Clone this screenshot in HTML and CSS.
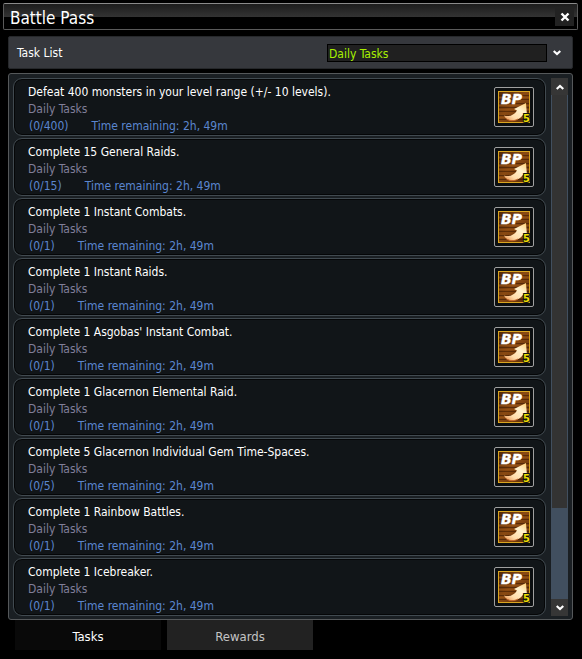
FILE: index.html
```html
<!DOCTYPE html>
<html lang="en">
<head>
	<meta charset="UTF-8">
	<meta name="viewport" content="width=device-width, initial-scale=1.0">
	<title>Battle Pass</title>
	<link rel="stylesheet" href="styles.css">
</head>
<body>
	<!-- reward icon, reused by every task -->
	<svg class="defs" width="0" height="0" aria-hidden="true">
		<defs>
			<linearGradient id="wood" x1="0" y1="0" x2="1" y2="1">
				<stop offset="0" stop-color="#4e2606"/>
				<stop offset="0.45" stop-color="#8a4a12"/>
				<stop offset="1" stop-color="#5a2a06"/>
			</linearGradient>
			<linearGradient id="gold" x1="0" y1="1" x2="1" y2="0">
				<stop offset="0" stop-color="#e08a4a"/>
				<stop offset="0.3" stop-color="#ffdcaa"/>
				<stop offset="0.65" stop-color="#fff2cf"/>
				<stop offset="1" stop-color="#ffcf70"/>
			</linearGradient>
			<symbol id="bp" viewBox="0 0 32 32">
				<rect width="32" height="32" fill="url(#wood)"/>
				<path d="M1 4.5h30M1 8.5h30M1 12.5h30M1 16.5h30M1 20.5h30M1 24.5h30M1 28.5h30" stroke="#3c1a04" stroke-opacity="0.6"/>
				<path d="M1 6.5h30M1 14.5h30M1 18.5h30M1 26.5h30" stroke="#a8601c" stroke-opacity="0.4"/>
				<rect x="0.5" y="0.5" width="31" height="31" fill="none" stroke="#d9a520"/>
				<path d="M6 24.5C11 26 16 24.5 19 19.5L16 18L28 12L29 24.5L26 22.5C23 27.5 18 30 13 29.5C9 29 7 27 6 24.5Z" fill="url(#gold)"/>
				<path d="M8 27.5C11 30 16 30.5 20 28" fill="none" stroke="#c8682a" stroke-width="1"/>
				<text class="bp-text" x="3" y="13">BP</text>
				<text class="bp-count" x="25" y="31">5</text>
			</symbol>
		</defs>
	</svg>

	<header class="title-bar">
		<h1>Battle Pass</h1>
		<button class="close" type="button" aria-label="Close">
			<svg width="10" height="10" viewBox="0 0 10 10"><path d="M1.5 1.5L8.5 8.5M8.5 1.5L1.5 8.5" stroke="#fff" stroke-width="2.4"/></svg>
		</button>
	</header>

	<main class="content">
		<div class="filter">
			<label for="filter">Task List</label>
			<div class="filter-box">
				<select id="filter">
					<option>Daily Tasks</option>
				</select>
				<svg class="chevron" width="8" height="6" viewBox="0 0 8 6"><path d="M0.7 1L4 4L7.3 1" fill="none" stroke="#fff" stroke-width="2.2"/></svg>
			</div>
		</div>

		<div class="panel">
			<ul class="tasks">
				<li class="task">
					<div class="info">
						<h2>Defeat 400 monsters in your level range (+/- 10 levels).</h2>
						<p class="type">Daily Tasks</p>
						<p class="progress"><span>(0/400)</span><span>Time remaining: 2h, 49m</span></p>
					</div>
					<div class="reward"><svg width="32" height="32"><use href="#bp"/></svg></div>
				</li>
				<li class="task">
					<div class="info">
						<h2>Complete 15 General Raids.</h2>
						<p class="type">Daily Tasks</p>
						<p class="progress"><span>(0/15)</span><span>Time remaining: 2h, 49m</span></p>
					</div>
					<div class="reward"><svg width="32" height="32"><use href="#bp"/></svg></div>
				</li>
				<li class="task">
					<div class="info">
						<h2>Complete 1 Instant Combats.</h2>
						<p class="type">Daily Tasks</p>
						<p class="progress"><span>(0/1)</span><span>Time remaining: 2h, 49m</span></p>
					</div>
					<div class="reward"><svg width="32" height="32"><use href="#bp"/></svg></div>
				</li>
				<li class="task">
					<div class="info">
						<h2>Complete 1 Instant Raids.</h2>
						<p class="type">Daily Tasks</p>
						<p class="progress"><span>(0/1)</span><span>Time remaining: 2h, 49m</span></p>
					</div>
					<div class="reward"><svg width="32" height="32"><use href="#bp"/></svg></div>
				</li>
				<li class="task">
					<div class="info">
						<h2>Complete 1 Asgobas' Instant Combat.</h2>
						<p class="type">Daily Tasks</p>
						<p class="progress"><span>(0/1)</span><span>Time remaining: 2h, 49m</span></p>
					</div>
					<div class="reward"><svg width="32" height="32"><use href="#bp"/></svg></div>
				</li>
				<li class="task">
					<div class="info">
						<h2>Complete 1 Glacernon Elemental Raid.</h2>
						<p class="type">Daily Tasks</p>
						<p class="progress"><span>(0/1)</span><span>Time remaining: 2h, 49m</span></p>
					</div>
					<div class="reward"><svg width="32" height="32"><use href="#bp"/></svg></div>
				</li>
				<li class="task">
					<div class="info">
						<h2>Complete 5 Glacernon Individual Gem Time-Spaces.</h2>
						<p class="type">Daily Tasks</p>
						<p class="progress"><span>(0/5)</span><span>Time remaining: 2h, 49m</span></p>
					</div>
					<div class="reward"><svg width="32" height="32"><use href="#bp"/></svg></div>
				</li>
				<li class="task">
					<div class="info">
						<h2>Complete 1 Rainbow Battles.</h2>
						<p class="type">Daily Tasks</p>
						<p class="progress"><span>(0/1)</span><span>Time remaining: 2h, 49m</span></p>
					</div>
					<div class="reward"><svg width="32" height="32"><use href="#bp"/></svg></div>
				</li>
				<li class="task">
					<div class="info">
						<h2>Complete 1 Icebreaker.</h2>
						<p class="type">Daily Tasks</p>
						<p class="progress"><span>(0/1)</span><span>Time remaining: 2h, 49m</span></p>
					</div>
					<div class="reward"><svg width="32" height="32"><use href="#bp"/></svg></div>
				</li>
			</ul>

			<div class="scrollbar">
				<button type="button" aria-label="Scroll up">
					<svg width="8" height="6" viewBox="0 0 8 6"><path d="M0.7 5L4 2L7.3 5" fill="none" stroke="#fff" stroke-width="2.2"/></svg>
				</button>
				<div class="track"><div class="thumb"></div></div>
				<button type="button" aria-label="Scroll down">
					<svg width="8" height="6" viewBox="0 0 8 6"><path d="M0.7 1L4 4L7.3 1" fill="none" stroke="#fff" stroke-width="2.2"/></svg>
				</button>
			</div>
		</div>

		<nav class="tabs">
			<button class="tab active" type="button">Tasks</button>
			<button class="tab" type="button">Rewards</button>
		</nav>
	</main>
</body>
</html>
```
FILE: styles.css
```css
* {
	box-sizing: border-box;
}

body {
	margin: 0;
	padding: 3px 4px 10px 3px;
	background: #000;
	color: #fff;
	font-family: Tahoma, "DejaVu Sans Condensed", "Noto Sans", sans-serif;
	font-size: 12px;
	line-height: 17px;
}

h1, h2, p, ul {
	margin: 0;
	padding: 0;
	font-weight: normal;
}

button {
	display: flex;
	align-items: center;
	justify-content: center;
	padding: 0;
	border: 0;
	color: inherit;
	font: inherit;
}

.defs {
	position: absolute;
}

.title-bar {
	display: flex;
	align-items: center;
	justify-content: space-between;
	height: 27px;
	padding: 0 3px 0 6px;
	border: 1px solid #5a5a5a;
	border-top-color: #8a8a8a;
	border-radius: 2px;
	background: linear-gradient(#1c1c1c, #333 13px, #000 13px);
}

.title-bar h1 {
	padding-top: 3px;
	font-size: 17px;
	line-height: 22px;
}

.close {
	width: 19px;
	height: 19px;
	background: #222;
}

.content {
	padding: 6px 5px 0 5px;
}

.filter {
	display: flex;
	align-items: center;
	justify-content: space-between;
	height: 33px;
	margin-bottom: 4px;
	padding: 0 7px 0 8px;
	border: 1px solid #26282b;
	border-radius: 2px;
	background: #36383d;
}

.filter label {
	padding-top: 2px;
}

.filter-box {
	display: flex;
	align-items: center;
	gap: 6px;
	width: 238px;
}

.filter-box select {
	flex: 1;
	height: 18px;
	padding: 1px 1px 0;
	border: 1px solid #000;
	background: #202020;
	color: #a8f000;
	font: inherit;
	appearance: none;
}

.chevron {
	margin-right: 4px;
}

.panel {
	display: flex;
	gap: 5px;
	padding: 4px 4px 3px;
	border: 1px solid #55585a;
	border-radius: 3px;
	background: #1a1f23;
}

.tasks {
	flex: 1;
	display: flex;
	flex-direction: column;
	gap: 2px;
	list-style: none;
}

.task {
	display: flex;
	align-items: center;
	justify-content: space-between;
	height: 58px;
	padding: 0 11px 0 14px;
	border: 1px solid #414a50;
	border-radius: 9px;
	background: #111518;
	box-shadow: inset 0 0 0 1px #050607;
}

.info {
	padding-top: 4px;
}

.task h2 {
	font-size: 12px;
}

.type {
	color: #807e98;
}

.progress {
	display: flex;
	gap: 23px;
	padding-left: 1px;
	color: #5b86cf;
}

.reward {
	display: flex;
	padding: 3px;
	border: 1px solid #a0a0a0;
	border-radius: 2px;
	background: #0b0e10;
}

.bp-text {
	fill: #fff;
	stroke: #fff;
	stroke-width: 0.4px;
	font: italic bold 14px "DejaVu Sans", sans-serif;
}

.bp-count {
	fill: #f0e000;
	stroke: #111;
	stroke-width: 2px;
	paint-order: stroke;
	font: bold 11px "DejaVu Sans Condensed", sans-serif;
}

.scrollbar {
	display: flex;
	flex-direction: column;
	width: 17px;
}

.scrollbar button {
	height: 17px;
	background: #363636;
}

.track {
	flex: 1;
	display: flex;
	flex-direction: column;
	justify-content: flex-end;
	border: 1px solid #414f5f;
	border-width: 0 1px;
	background: #333;
}

.thumb {
	height: 18%;
	background: #414f5f;
}

.tabs {
	display: flex;
	gap: 6px;
	padding-left: 7px;
}

.tab {
	width: 146px;
	height: 30px;
	padding-top: 2px;
	background: #222;
	color: #c4c4c4;
	font-size: 13px;
}

.tab.active {
	background: #090909;
	color: #fff;
}
```
